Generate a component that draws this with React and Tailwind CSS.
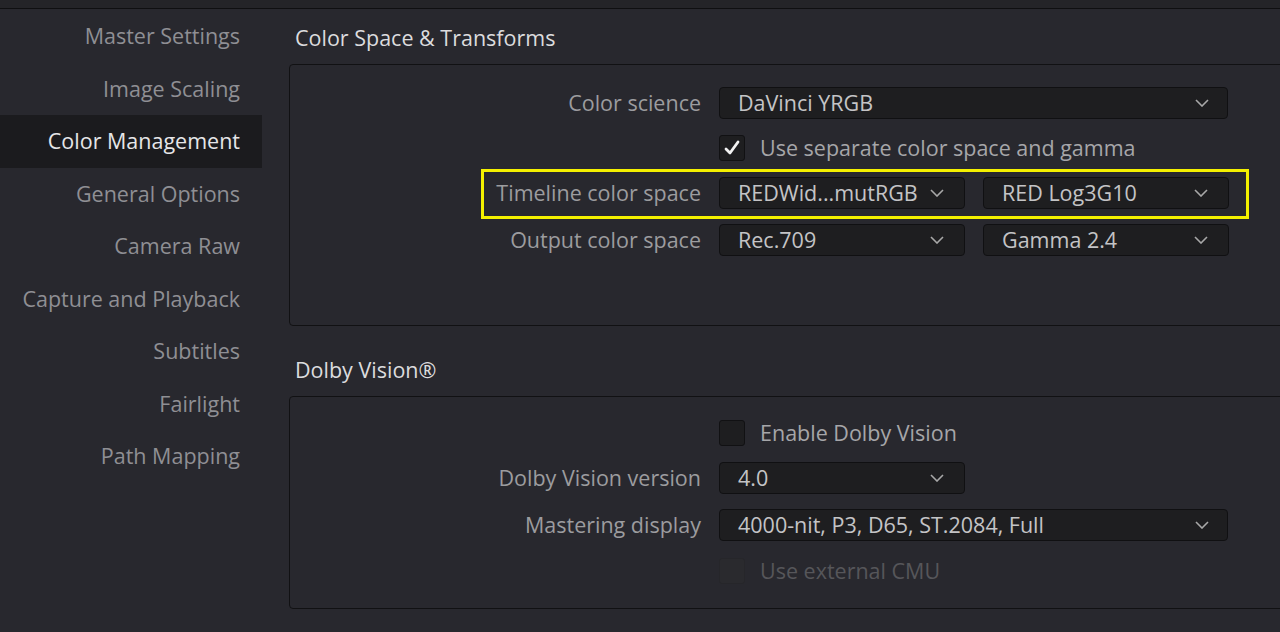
import React from "react";

const font = { fontFamily: '"Open Sans", "Noto Sans", sans-serif' };

function Chevron() {
  return (
    <svg width="14" height="8" viewBox="0 0 14 8" className="shrink-0">
      <path d="M1 1 L7 7 L13 1" fill="none" stroke="#a8a8a8" strokeWidth="1.6" />
    </svg>
  );
}

function Select({ value, wide }) {
  return (
    <div
      className={`flex h-[32px] items-center justify-between rounded-[4px] border border-[#101012] bg-[#1e1e20] pl-[18px] ${
        wide ? "w-[509px] pr-[18px]" : "w-[246px] pr-[20px]"
      }`}
    >
      <span className="text-[21.5px] text-[#c4c4c6]">{value}</span>
      <Chevron />
    </div>
  );
}

function Check({ checked, disabled }) {
  return (
    <div
      className={`flex h-[26px] w-[26px] items-center justify-center rounded-[3px] border ${
        disabled ? "border-[#26262a] bg-[#2a2a2e]" : "border-[#111113] bg-[#1e1e20]"
      }`}
    >
      {checked && (
        <svg width="18" height="18" viewBox="0 0 18 18">
          <path d="M3 10 L7 14 L15 3" fill="none" stroke="#f2f2f2" strokeWidth="2.8" strokeLinecap="round" strokeLinejoin="round" />
        </svg>
      )}
    </div>
  );
}

function Row({ label, children, className = "" }) {
  return (
    <div className={`flex h-[32px] items-center ${className}`}>
      <div className="w-[429px] shrink-0 pr-[18px] text-right text-[21.5px] text-[#9c9c9f]">{label}</div>
      <div className="flex items-center gap-[18px]">{children}</div>
    </div>
  );
}

const navItems = [
  "Master Settings",
  "Image Scaling",
  "Color Management",
  "General Options",
  "Camera Raw",
  "Capture and Playback",
  "Subtitles",
  "Fairlight",
  "Path Mapping",
];

export default function App() {
  return (
    <div className="flex h-[632px] w-[1280px] flex-col overflow-hidden bg-[#28282e]" style={font}>
      <div className="box-content h-[8px] shrink-0 border-b border-[#0f0f11] bg-[#242428]" />
      <div className="flex flex-1 overflow-hidden">
        <div className="w-[262px] shrink-0 pt-[1px]">
          {navItems.map((item) => {
            const active = item === "Color Management";
            return (
              <div
                key={item}
                className={`flex h-[52.5px] items-center justify-end whitespace-nowrap pr-[22px] text-[21.5px] ${
                  active ? "bg-[#1b1b1e] text-[#e6e6e8]" : "text-[#8f8f94]"
                }`}
              >
                {item}
              </div>
            );
          })}
        </div>
        <div className="ml-[27px] flex-1 overflow-hidden">
          <div className="pl-[6px] pt-[15px] text-[21.5px] leading-[28px] text-[#dcdcde]">Color Space &amp; Transforms</div>
          <div className="mt-[12px] h-[262px] w-[1010px] rounded-[4px] border border-[#111113] pt-[22px]">
            <Row label="Color science">
              <Select value="DaVinci YRGB" wide />
            </Row>
            <Row label="" className="mt-[13px]">
              <div className="flex items-center gap-[15px]">
                <Check checked />
                <span className="text-[21.5px] text-[#a6a6a9]">Use separate color space and gamma</span>
              </div>
            </Row>
            <div className="relative mt-[13px]">
              <div className="pointer-events-none absolute left-[191px] top-[-8px] h-[50px] w-[768px] border-[3px] border-[#f4f000]" />
              <Row label="Timeline color space">
                <Select value="REDWid...mutRGB" />
                <Select value="RED Log3G10" />
              </Row>
            </div>
            <Row label="Output color space" className="mt-[15px]">
              <Select value="Rec.709" />
              <Select value="Gamma 2.4" />
            </Row>
          </div>
          <div className="mt-[30px] pl-[6px] text-[21.5px] leading-[28px] text-[#dcdcde]">Dolby Vision®</div>
          <div className="mt-[12px] h-[213px] w-[1010px] rounded-[4px] border border-[#111113] pt-[20px]">
            <Row label="">
              <div className="flex items-center gap-[15px]">
                <Check />
                <span className="text-[21.5px] text-[#a6a6a9]">Enable Dolby Vision</span>
              </div>
            </Row>
            <Row label="Dolby Vision version" className="mt-[13px]">
              <Select value="4.0" />
            </Row>
            <Row label="Mastering display" className="mt-[15px]">
              <Select value="4000-nit, P3, D65, ST.2084, Full" wide />
            </Row>
            <Row label="" className="mt-[14px]">
              <div className="flex items-center gap-[15px]">
                <Check disabled />
                <span className="text-[21.5px] text-[#56565a]">Use external CMU</span>
              </div>
            </Row>
          </div>
        </div>
      </div>
    </div>
  );
}
